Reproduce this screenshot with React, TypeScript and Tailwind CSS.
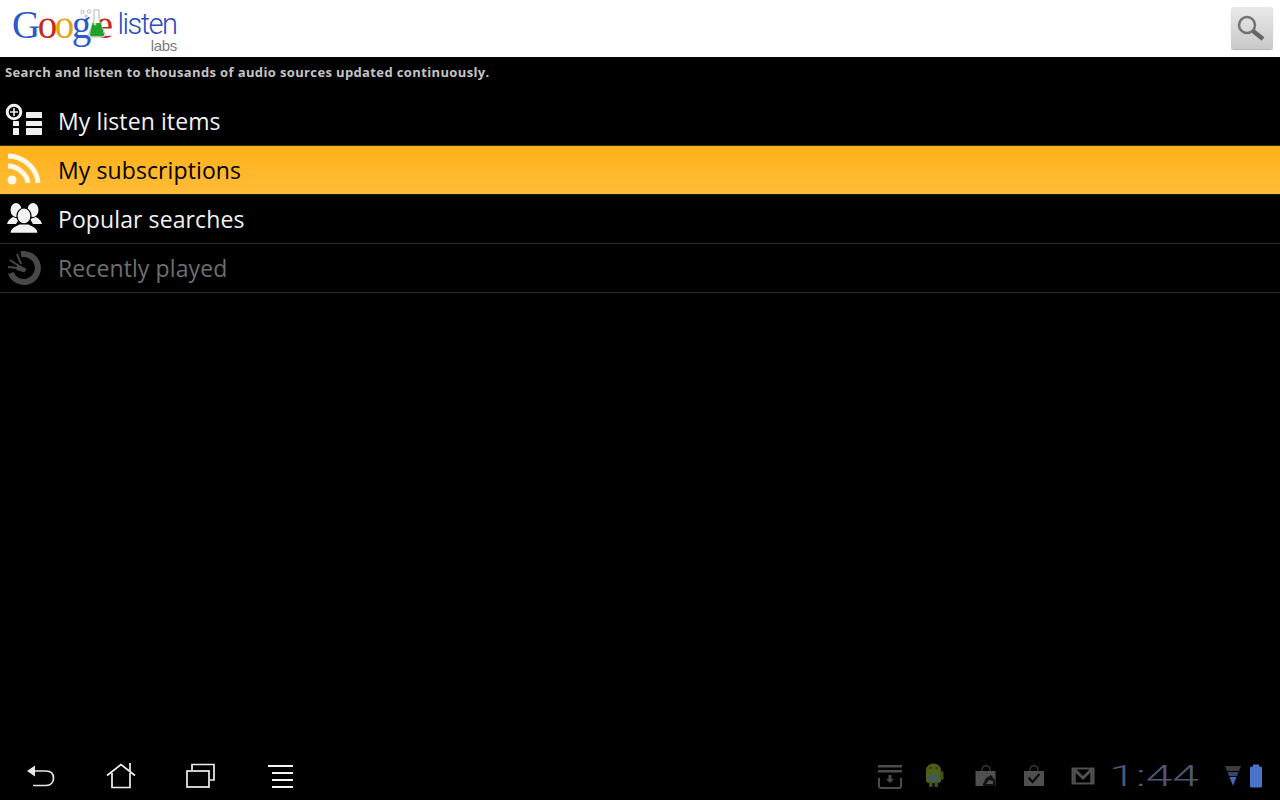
import React from 'react'

const rows = [
  { label: 'My listen items', icon: 'list', state: 'normal' },
  { label: 'My subscriptions', icon: 'rss', state: 'active' },
  { label: 'Popular searches', icon: 'people', state: 'normal' },
  { label: 'Recently played', icon: 'recent', state: 'disabled' },
]

function Flask() {
  return (
    <svg width="27" height="30" viewBox="0 0 27 30" className="z-10 -mr-[11px] -ml-[9px] mb-[7px] self-end">
      <circle cx="2.500" cy="3" r="1.600" fill="none" stroke="#a8a8a8" strokeWidth="0.800" />
      <circle cx="6" cy="7" r="1.200" fill="none" stroke="#a8a8a8" strokeWidth="0.800" />
      <circle cx="9" cy="2.500" r="1.700" fill="none" stroke="#a8a8a8" strokeWidth="0.800" />
      <path d="M14 1h5v10l6 14c.5 2-.5 3-2 3H11c-2 0-3-1-2-3l5-14z" fill="#fff" stroke="#b5b5b5" strokeWidth="1" />
      <path d="M12.500 14h8l3.500 11c.4 1.500-.3 2.200-1.500 2.200H11.500c-1.400 0-2-.8-1.500-2.200z" fill="#1fa02a" />
      <circle cx="15" cy="15" r="1.400" fill="#bfe6b5" />
    </svg>
  )
}

function RowIcon({ name }: { name: string }) {
  if (name === 'list') {
    return (
      <svg width="40" height="48" viewBox="0 0 40 48" fill="#f0f0f0">
        <circle cx="10" cy="15" r="6.800" fill="none" stroke="#f0f0f0" strokeWidth="3" />
        <path d="M9.200 11h1.600v3.200H14v1.600h-3.200V19H9.200v-3.200H6v-1.600h3.200z" />
        <rect x="22" y="15" width="16" height="6" rx="0.500" />
        <rect x="22" y="24" width="16" height="5" rx="0.500" />
        <rect x="22" y="31" width="16" height="7" rx="0.500" />
        <rect x="9" y="24" width="6" height="5" rx="0.500" />
        <rect x="9" y="31" width="6" height="7" rx="0.500" />
      </svg>
    )
  }
  if (name === 'rss') {
    return (
      <svg width="40" height="48" viewBox="0 0 40 48" fill="none" stroke="#fff8e8" strokeWidth="5">
        <path d="M4 10c15 0 29 12 30 27" />
        <path d="M4 20c9 0 19 8 20 17" />
        <circle cx="8" cy="34" r="4.500" fill="#fff8e8" stroke="none" />
      </svg>
    )
  }
  if (name === 'people') {
    return (
      <svg width="40" height="48" viewBox="0 0 40 48" fill="#f4f4f4">
        <ellipse cx="12" cy="15" rx="5.500" ry="7" />
        <ellipse cx="29" cy="15" rx="5.500" ry="7" />
        <path d="M3 29c1-4 4-6 6-7l6 2-3 5H3zM38 29c-1-4-4-6-6-7l-6 2 3 5h9z" />
        <ellipse cx="20" cy="21" rx="7" ry="8" stroke="#000" strokeWidth="1.200" />
        <path d="M6 38c0-5 4-6 9-9h10c5 3 9 4 9 9-3 .5-25 .5-28 0z" stroke="#000" strokeWidth="1.200" />
      </svg>
    )
  }
  return (
    <svg width="40" height="48" viewBox="0 0 40 48" fill="none" stroke="#484848">
      <path d="M17 10.300A14 14 0 1 1 6.800 29" strokeWidth="6" />
      <path d="M14 21l8 4-1.500 3-8-2.500z" fill="#484848" strokeWidth="1" />
      <path d="M4 23l10 1M6 16l9 6M13 10l4 10" strokeWidth="2" />
    </svg>
  )
}

function NavIcons() {
  return (
    <div className="flex items-center">
      <svg width="40" height="32" viewBox="0 0 40 32" className="ml-[20px]" fill="none" stroke="#e8e8e8" strokeWidth="1.700">
        <path d="M14 11h12c5 0 7.500 3 7.500 7s-2.500 7.500-7.500 7.500H13" />
        <path d="M7 11l8-5.500v11z" fill="#e8e8e8" stroke="none" />
      </svg>
      <svg width="40" height="32" viewBox="0 0 40 32" className="ml-[40px]" fill="none" stroke="#f0f0f0" strokeWidth="1.700">
        <path d="M7 15.500L21 4.500l14 11" />
        <path d="M12 13v14.500h18V13M30 3v9" />
      </svg>
      <svg width="40" height="32" viewBox="0 0 40 32" className="ml-[40px]" fill="none" stroke="#f0f0f0" strokeWidth="1.700">
        <rect x="7" y="11" width="22" height="16" />
        <path d="M12 10V4.500h22V20h-4" />
      </svg>
      <svg width="40" height="32" viewBox="0 0 40 32" className="ml-[41px]" fill="#f5f5f5">
        <rect x="7" y="5" width="25" height="2" />
        <rect x="11" y="12" width="21" height="2" />
        <rect x="11" y="19" width="21" height="2" />
        <rect x="11" y="26" width="21" height="2" />
      </svg>
    </div>
  )
}

function StatusIcons() {
  return (
    <div className="flex items-center">
      <svg width="24" height="26" viewBox="0 0 24 26" fill="#4c4c4c">
        <rect x="0" y="2" width="24" height="2.500" />
        <rect x="0" y="7" width="24" height="2.500" />
        <path d="M10.500 12h3v4h2.500L12 20l-4-4h2.500z" />
        <path d="M1 15v8c0 1 .5 2 2 2h18c1.500 0 2-1 2-2v-8" fill="none" stroke="#4c4c4c" strokeWidth="2" />
      </svg>
      <svg width="20" height="26" viewBox="0 0 20 26" className="ml-[22px]">
        <ellipse cx="9.500" cy="7" rx="7.500" ry="6.500" fill="#4c5c18" />
        <rect x="2" y="7" width="15" height="13" rx="3" fill="#4f6019" />
        <rect x="16" y="8" width="3.500" height="9" rx="1.700" fill="#425016" />
        <rect x="5" y="19" width="3.500" height="5" rx="1.300" fill="#425016" />
        <rect x="10.500" y="19" width="3.500" height="5" rx="1.300" fill="#425016" />
        <path d="M4.500 12l10 6M14.500 12l-10 6" stroke="#3a5878" strokeWidth="2.500" />
        <circle cx="6.500" cy="5" r="0.800" fill="#111" />
        <circle cx="12.500" cy="5" r="0.800" fill="#111" />
      </svg>
      <svg width="22" height="22" viewBox="0 0 22 22" className="ml-[31px]" fill="#505050">
        <path d="M7 7V4.500a3.800 3.800 0 0 1 8 0V7" fill="none" stroke="#505050" strokeWidth="1" />
        <rect x="0.500" y="6" width="20" height="15" />
        <path d="M8 19l3-6 5-3 4 5v6H8z" fill="#111" />
        <path d="M11 19l3-4 4 1v3z" fill="#505050" />
      </svg>
      <svg width="22" height="22" viewBox="0 0 22 22" className="ml-[26px]" fill="#505050">
        <path d="M7 7V4.500a3.800 3.800 0 0 1 8 0V7" fill="none" stroke="#505050" strokeWidth="1" />
        <rect x="1" y="6" width="20" height="15" />
        <path d="M5.500 12.500l4 4.500 7-8" fill="none" stroke="#0c0c0c" strokeWidth="2.200" />
      </svg>
      <svg width="24" height="18" viewBox="0 0 24 18" className="ml-[26px]" fill="none" stroke="#505050">
        <rect x="1.500" y="1.500" width="21" height="15" strokeWidth="2" />
        <path d="M3 2l9 9 9-9" strokeWidth="3" />
        <path d="M3.500 3v13M20.500 3v13" strokeWidth="2.500" />
      </svg>
    </div>
  )
}

export default function App() {
  return (
    <div className="flex h-[800px] w-[1280px] flex-col overflow-hidden bg-black font-['Open_Sans',sans-serif]">
      {/* Header */}
      <div className="flex h-[57px] shrink-0 items-start justify-between bg-white pl-[12px] pr-[7px]">
        <div className="flex w-[165px] flex-col">
          <div className="flex h-[46px] items-end">
            <div className="flex h-[46px] items-end font-['Liberation_Serif',serif] text-[39px] leading-[42px] tracking-[-2.5px]">
              <span className="text-[#2a5bc8]">G</span>
              <span className="text-[#c8281c]">o</span>
              <span className="text-[#e0a810]">o</span>
              <span className="text-[#2a5bc8]">g</span>
              <Flask />
              <span className="text-[#c8281c]">e</span>
            </div>
            <span className="mb-[9px] ml-[7px] font-['Roboto',sans-serif] text-[29px] font-light leading-[26px] tracking-[-1.5px] text-[#2a4bbc]">listen</span>
          </div>
          <span className="-mt-[8px] self-end font-['Liberation_Sans',sans-serif] text-[15px] leading-[15px] tracking-[-0.3px] text-[#7a7a7a]">labs</span>
        </div>
        <button className="mt-[7px] flex h-[42px] w-[42px] items-center justify-center rounded-[2px] bg-gradient-to-b from-[#e9e9e9] to-[#c9c9c9] shadow-[0_1px_1px_rgba(0,0,0,0.3)]">
          <svg width="30" height="30" viewBox="0 0 30 30" fill="none">
            <circle cx="10" cy="12" r="8" stroke="#727272" strokeWidth="2.500" />
            <path d="M16 18l10 8" stroke="#666" strokeWidth="4.500" />
          </svg>
        </button>
      </div>

      {/* Description */}
      <p className="h-[40px] shrink-0 pl-[5px] pt-[6px] font-['Open_Sans',sans-serif] text-[13px] font-bold leading-[19px] tracking-[0.37px] text-[#c4c4c4]">
        Search and listen to thousands of audio sources updated continuously.
      </p>

      {/* Menu list */}
      <div className="flex flex-col">
        {rows.map(row => (
          <div
            key={row.label}
            className={
              row.state === 'active'
                ? 'flex h-[49px] items-center border-b border-[#1a1a1a] bg-gradient-to-b from-[#ffb114] to-[#ffbd38] pl-[4px]'
                : 'flex h-[49px] items-center border-b border-[#2a2a2a] pl-[4px]'
            }
          >
            <RowIcon name={row.icon} />
            <span
              className={
                row.state === 'active'
                  ? 'ml-[14px] text-[23px] leading-[32px] tracking-[0.1px] text-black'
                  : row.state === 'disabled'
                    ? 'ml-[14px] text-[23px] leading-[32px] tracking-[0.1px] text-[#6e6e6e]'
                    : 'ml-[14px] text-[23px] leading-[32px] tracking-[0.1px] text-[#f2f2f2]'
              }
            >
              {row.label}
            </span>
          </div>
        ))}
      </div>

      <div className="flex-1" />

      {/* System bar */}
      <div className="flex h-[48px] shrink-0 items-center justify-between pr-[17px]">
        <NavIcons />
        <div className="flex items-center">
          <StatusIcons />
          <span className="ml-[14px] w-[90px] origin-left scale-x-[1.6] font-['Roboto',sans-serif] text-[30px] font-light leading-[32px] text-[#4d5878]">1:44</span>
          <svg width="16" height="22" viewBox="0 0 16 22" className="ml-[26px]">
            <path d="M0 1h16l-2 5H2z" fill="#3c3c3c" />
            <path d="M2.500 7h11l-1.500 4H4z" fill="#34466e" />
            <path d="M4.500 12h7L8 21z" fill="#3f68b8" />
          </svg>
          <svg width="14" height="24" viewBox="0 0 14 24" className="ml-[8px]">
            <rect x="4" y="0.500" width="6" height="3" fill="#4a74c8" />
            <rect x="1" y="2.500" width="12" height="21" rx="1.500" fill="#4a74c8" />
          </svg>
        </div>
      </div>
    </div>
  )
}
